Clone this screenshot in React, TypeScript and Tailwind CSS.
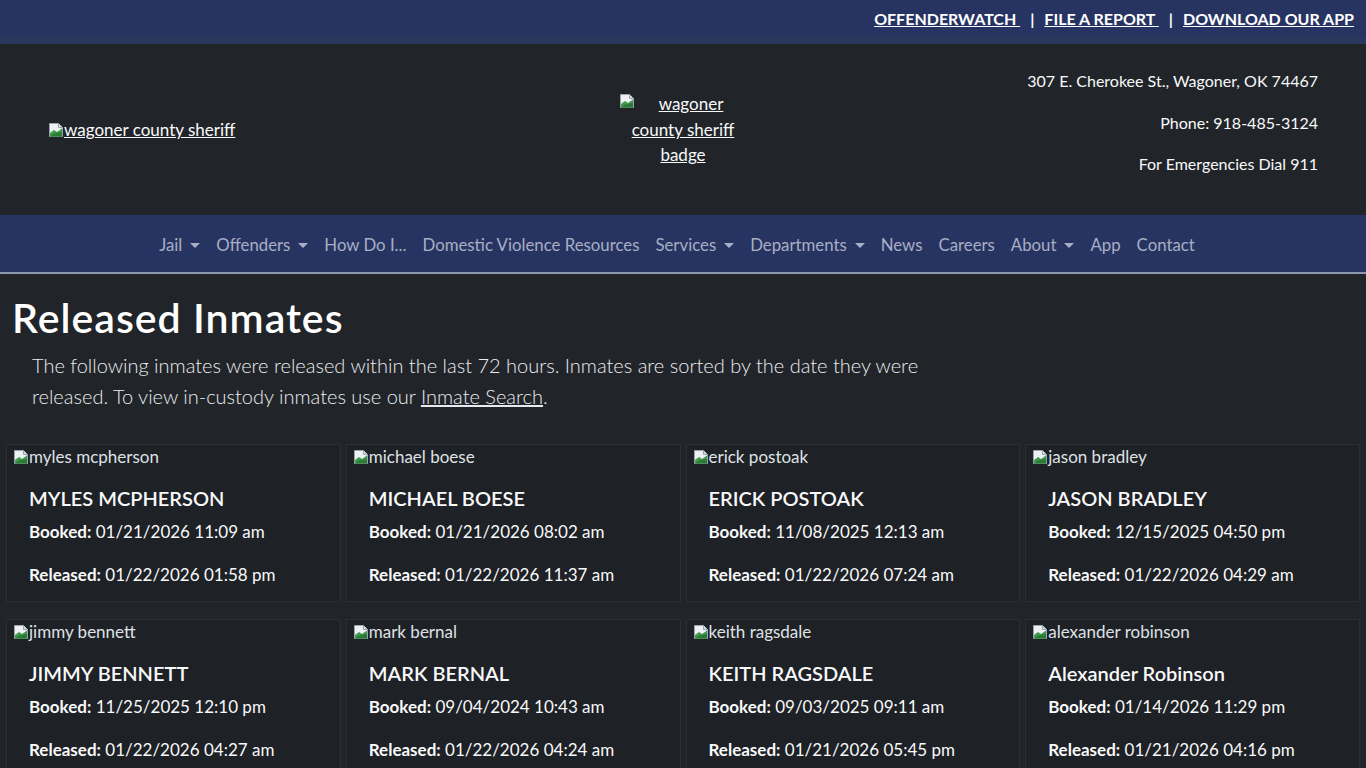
import React from "react"

const font = "font-['Lato','Liberation_Sans',sans-serif]"

// stand-in for the browser's broken-image glyph
function BrokenImg({ className = "" }: { className?: string }) {
    return (
        <svg width="16" height="16" viewBox="0 0 16 16" className={`inline-block align-[-2px] ${className}`}>
            <path d="M1.5 1.5h9l4 4v9h-13z" fill="#eef1f4" stroke="#9aa3ad" />
            <path d="M10.5 1.5v4h4" fill="#d5dbe1" stroke="#9aa3ad" />
            <path d="M2 14.5 L2 11 L6 8 L9 10 L14 6.5 L14 14.5 Z" fill="#3f9a4a" />
            <path d="M2 14.5 L6 11.5 L14 10 L14 14.5 Z" fill="#2c7a36" />
        </svg>
    )
}

function Caret() {
    return (
        <span className="ml-2 inline-block align-[3px] border-x-[5px] border-t-[5px] border-x-transparent border-t-current" />
    )
}

const navItems: { label: string; drop?: boolean }[] = [
    { label: "Jail", drop: true },
    { label: "Offenders", drop: true },
    { label: "How Do I..." },
    { label: "Domestic Violence Resources" },
    { label: "Services", drop: true },
    { label: "Departments", drop: true },
    { label: "News" },
    { label: "Careers" },
    { label: "About", drop: true },
    { label: "App" },
    { label: "Contact" },
]

const inmates = [
    { alt: "myles mcpherson", name: "MYLES MCPHERSON", booked: "01/21/2026 11:09 am", released: "01/22/2026 01:58 pm" },
    { alt: "michael boese", name: "MICHAEL BOESE", booked: "01/21/2026 08:02 am", released: "01/22/2026 11:37 am" },
    { alt: "erick postoak", name: "ERICK POSTOAK", booked: "11/08/2025 12:13 am", released: "01/22/2026 07:24 am" },
    { alt: "jason bradley", name: "JASON BRADLEY", booked: "12/15/2025 04:50 pm", released: "01/22/2026 04:29 am" },
    { alt: "jimmy bennett", name: "JIMMY BENNETT", booked: "11/25/2025 12:10 pm", released: "01/22/2026 04:27 am" },
    { alt: "mark bernal", name: "MARK BERNAL", booked: "09/04/2024 10:43 am", released: "01/22/2026 04:24 am" },
    { alt: "keith ragsdale", name: "KEITH RAGSDALE", booked: "09/03/2025 09:11 am", released: "01/21/2026 05:45 pm" },
    { alt: "alexander robinson", name: "Alexander Robinson", booked: "01/14/2026 11:29 pm", released: "01/21/2026 04:16 pm" },
]

export default function App() {
    return (
        <div className={`${font} min-h-screen bg-[#212529] text-[#f8f9fa]`}>
            {/* top links */}
            <div className="flex h-[44px] items-center justify-end border-b-[7px] border-[#29375d] bg-[#273462] pr-3 text-base font-bold text-white">
                <a className="whitespace-pre underline">OFFENDERWATCH </a>
                <span className="mx-[10px]">|</span>
                <a className="whitespace-pre underline">FILE A REPORT </a>
                <span className="mx-[10px]">|</span>
                <a className="whitespace-pre underline">DOWNLOAD OUR APP</a>
            </div>

            {/* header */}
            <div className="grid h-[171px] grid-cols-3 items-center px-12">
                <div className="text-[17px]">
                    <a className="underline">
                        <BrokenImg />wagoner county sheriff
                    </a>
                </div>
                <div className="flex justify-center">
                    <a className="w-[127px] text-center text-[17px] leading-[25.5px] underline">
                        <BrokenImg className="float-left mt-[2px]" />
                        wagoner county sheriff badge
                    </a>
                </div>
                <div className="pb-[14px] text-right leading-[25.5px]">
                    <p className="mb-4">307 E. Cherokee St., Wagoner, OK 74467</p>
                    <p className="mb-4">Phone: 918-485-3124</p>
                    <p>For Emergencies Dial 911</p>
                </div>
            </div>

            {/* nav */}
            <nav className="flex h-[59px] items-center justify-center border-b-2 border-[#8d97ad] bg-[#273462] pt-[2px] pr-3 text-[16.8px] text-[#a8aec4]">
                {navItems.map((n) => (
                    <a key={n.label} className="px-2">
                        {n.label}
                        {n.drop && <Caret />}
                    </a>
                ))}
            </nav>

            <main className="pt-5">
                <h1 className="pl-3 text-[41px] font-semibold leading-[48px] tracking-[0.025em] text-white">Released Inmates</h1>
                <p className="mt-2 mb-8 max-w-[930px] pl-8 text-[20px] font-light leading-[31px] text-[#e9ecef]">
                    The following inmates were released within the last 72 hours. Inmates are sorted by the date they were released. To view in-custody inmates use our{" "}
                    <a className="underline">Inmate Search</a>.
                </p>

                <div className="grid grid-cols-4 gap-x-[5px] gap-y-[17px] px-[6px]">
                    {inmates.map((m) => (
                        <div key={m.alt} className="border border-[#2b2f34] bg-[#1e2125]">
                            <div className="ml-[6px] h-6 text-[17px] leading-6 text-[#dee2e6]">
                                <BrokenImg />
                                {m.alt}
                            </div>
                            <div className="pt-4 pr-4 pb-[13px] pl-[22px]">
                                <h5 className="mb-[6px] text-[20px] font-semibold leading-[27px]">{m.name}</h5>
                                <p className="mb-4 text-[17px] leading-[27px]">
                                    <b>Booked:</b> {m.booked}
                                </p>
                                <p className="text-[17px] leading-[27px]">
                                    <b>Released:</b> {m.released}
                                </p>
                            </div>
                        </div>
                    ))}
                </div>
            </main>
        </div>
    )
}
